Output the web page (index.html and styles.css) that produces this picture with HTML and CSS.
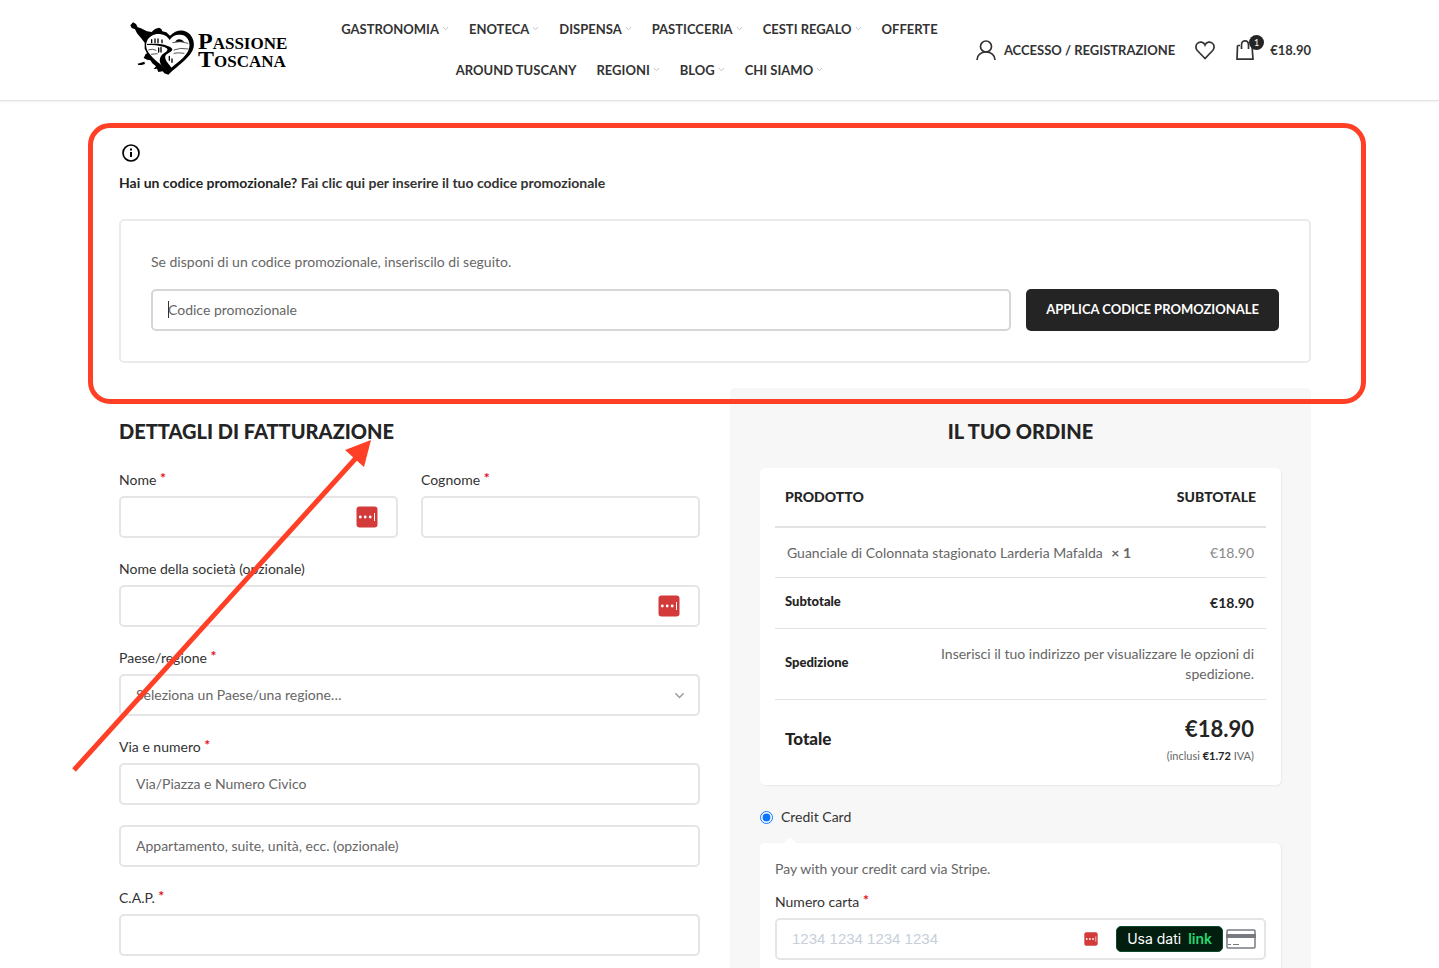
FILE: index.html
```html
<!DOCTYPE html>
<html lang="it">
<head>
<meta charset="utf-8">
<meta name="viewport" content="width=device-width, initial-scale=1">
<title>Pagamento – Passione Toscana</title>
<link rel="stylesheet" href="styles.css">
</head>
<body>
<svg class="defs" aria-hidden="true">
  <symbol id="chev" viewBox="0 0 8 5"><path d="M1 .8 4 4 7 .8" fill="none" stroke="currentColor"/></symbol>
  <symbol id="pass" viewBox="0 0 22 22"><rect x=".5" y=".5" width="21" height="21" rx="3" fill="#d33b3b"/><circle cx="4.300" cy="11" r="1.400" fill="#fff"/><circle cx="9.200" cy="11" r="1.400" fill="#fff"/><circle cx="14.200" cy="11" r="1.400" fill="#fff"/><path d="M18.500 7v8" stroke="#fff"/></symbol>
</svg>
<header class="header">
  <div class="container header-row">
    <a class="logo" href="#">
      <svg class="logo-mark" viewBox="12 3 198 186" aria-hidden="true">
        <path d="M16 22 24 13 33 18 38 28 48 31 58 36 66 40 80 42 86 36 92 32 102 29 109 33 112 40 124 43 135 53C150 38 168 33 184 41 202 50 209 70 206 88 200 116 160 142 130 170L118 166 113 160 100 162 96 152 86 153 93 145 82 136 76 127 66 125 56 120 62 108 66 106 59 92 59 74 48 60 36 46 30 34 20 30Z"/>
        <path d="M134 66C124 47 96 43 80 53 60 65 60 87 70 103 84 124 108 138 128 160 146 140 188 118 193 88 196 70 186 54 172 51 156 48 142 52 134 66Z" fill="#fff"/>
        <path d="M66 78C90 76 112 77 126 83 144 89 148 96 132 104 118 111 118 118 126 132L140 150 128 162 112 146C100 130 102 115 118 105 131 97 130 92 118 87 100 81 84 82 66 81Z"/>
        <path d="M80 65v9M90 63v11M99 63v11M111 66v8M101 90v12M108 88v14M133 115v12M141 123v10" stroke="#000" stroke-width="4" stroke-linecap="round"/>
        <path d="M150 71Q161 57 178 71ZM38 137 48 134 58 131 60 138 50 141 40 141Z"/>
        <path d="M142 74Q164 67 190 76M70 96Q82 91 94 97M146 96Q166 88 190 93M78 109 98 107M146 106Q160 103 178 106" fill="none" stroke="#000" stroke-width="2"/>
      </svg>
      <span class="logo-name">Passione<br>Toscana</span>
    </a>
    <nav class="nav" aria-label="Principale">
      <a href="#">GASTRONOMIA<svg class="caret"><use href="#chev"/></svg></a>
      <a href="#">ENOTECA<svg class="caret"><use href="#chev"/></svg></a>
      <a href="#">DISPENSA<svg class="caret"><use href="#chev"/></svg></a>
      <a href="#">PASTICCERIA<svg class="caret"><use href="#chev"/></svg></a>
      <a href="#">CESTI REGALO<svg class="caret"><use href="#chev"/></svg></a>
      <a href="#">OFFERTE</a>
      <a href="#">AROUND TUSCANY</a>
      <a href="#">REGIONI<svg class="caret"><use href="#chev"/></svg></a>
      <a href="#">BLOG<svg class="caret"><use href="#chev"/></svg></a>
      <a href="#">CHI SIAMO<svg class="caret"><use href="#chev"/></svg></a>
    </nav>
    <div class="tools">
      <a href="#" class="account"><svg class="icon" viewBox="0 0 20 20"><circle cx="10" cy="6.500" r="5.500"/><path d="M1 20C1 15 5 12 10 12s9 3 9 8"/></svg>ACCESSO / REGISTRAZIONE</a>
      <a href="#" aria-label="Preferiti"><svg class="icon" viewBox="0 0 20 20"><path d="M10 18.500 2.300 10.500C.5 8.500.4 5.300 2.300 3.500 4.500 1.300 8.500 1.500 10 5 11.500 1.500 15.500 1.300 17.700 3.500 19.600 5.300 19.500 8.500 17.700 10.500Z"/></svg></a>
      <a href="#" class="cart"><span class="bag"><svg class="icon" viewBox="0 0 20 20"><path d="M2.500 5.500H5M15 5.500H17L18 19.200H2L2.500 5.500M6.500 9V5C6.500-.5 13.500-.5 13.500 5V9"/></svg><span class="badge">1</span></span>€18.90</a>
    </div>
  </div>
</header>
<main class="container main">
  <section class="promo">
    <svg class="info" viewBox="0 0 24 24" aria-hidden="true"><circle cx="12" cy="12" r="8" fill="none" stroke="#000" stroke-width="1.700"/><path d="M11 11h2v5h-2zM11 7.500h2v2h-2z"/></svg>
    <p class="promo-ask">Hai un codice promozionale? <a href="#codice">Fai clic qui per inserire il tuo codice promozionale</a></p>
    <form class="coupon">
      <label for="codice">Se disponi di un codice promozionale, inseriscilo di seguito.</label>
      <div class="coupon-row">
        <div class="field"><input class="input focused" id="codice" type="text" placeholder="Codice promozionale"><span class="cursor"></span></div>
        <button class="apply" type="button">APPLICA CODICE PROMOZIONALE</button>
      </div>
    </form>
  </section>
  <div class="columns">
    <form class="billing">
      <h2>DETTAGLI DI FATTURAZIONE</h2>
      <div class="names">
        <div class="group"><label for="nome">Nome <sup>*</sup></label><div class="field"><input class="input" id="nome" type="text"><svg class="pass"><use href="#pass"/></svg></div></div>
        <div class="group"><label for="cognome">Cognome <sup>*</sup></label><input class="input" id="cognome" type="text"></div>
      </div>
      <div class="group"><label for="societa">Nome della società (opzionale)</label><div class="field"><input class="input" id="societa" type="text"><svg class="pass"><use href="#pass"/></svg></div></div>
      <div class="group"><label for="paese">Paese/regione <sup>*</sup></label><div class="field"><select class="input" id="paese"><option>Seleziona un Paese/una regione…</option></select><svg class="select-caret"><use href="#chev"/></svg></div></div>
      <div class="group"><label for="via">Via e numero <sup>*</sup></label><input class="input" id="via" type="text" placeholder="Via/Piazza e Numero Civico"></div>
      <input class="input" type="text" aria-label="Appartamento" placeholder="Appartamento, suite, unità, ecc. (opzionale)">
      <div class="group"><label for="cap">C.A.P. <sup>*</sup></label><input class="input" id="cap" type="text"></div>
      <svg class="arrow" viewBox="0 0 300 332" aria-hidden="true"><path d="M2 330 284 18" stroke="#ff4026" stroke-width="5"/><path d="M299 0 273 10 292 27Z" fill="#ff4026"/></svg>
    </form>
    <section class="order">
      <h2>IL TUO ORDINE</h2>
      <div class="summary">
        <table>
          <colgroup><col class="col-name"><col><col class="col-price"></colgroup>
          <thead><tr><th scope="col" colspan="2">PRODOTTO</th><th scope="col">SUBTOTALE</th></tr></thead>
          <tbody>
            <tr class="item"><td colspan="2">Guanciale di Colonnata stagionato Larderia Mafalda <b>× 1</b></td><td>€18.90</td></tr>
            <tr><th scope="row">Subtotale</th><td class="strong" colspan="2">€18.90</td></tr>
            <tr><th scope="row">Spedizione</th><td colspan="2">Inserisci il tuo indirizzo per visualizzare le opzioni di spedizione.</td></tr>
            <tr class="total"><th scope="row">Totale</th><td colspan="2"><strong>€18.90</strong><small>(inclusi <b>€1.72</b> IVA)</small></td></tr>
          </tbody>
        </table>
      </div>
      <label class="method"><input type="radio" name="metodo" checked>Credit Card</label>
      <div class="payment">
        <p>Pay with your credit card via Stripe.</p>
        <label for="carta">Numero carta <sup>*</sup></label>
        <div class="field">
          <input class="input card-input" id="carta" type="text" placeholder="1234 1234 1234 1234">
          <div class="card-extras">
            <svg class="pass-small"><use href="#pass"/></svg>
            <button class="link" type="button">Usa dati <b>link</b></button>
            <svg class="card" viewBox="0 0 30 20" aria-hidden="true"><rect x="1" y="1" width="28" height="18" rx="1" fill="#fff" stroke="#777b80" stroke-width="1.500"/><path d="M0 5h30v4H0z" fill="#777b80"/><path d="M2 15.500h3M7 15.500h6" stroke="#777b80" stroke-width="1.200"/></svg>
          </div>
        </div>
      </div>
    </section>
  </div>
</main>
</body>
</html>
```
FILE: styles.css
```css
* { box-sizing: border-box; }
body { margin: 0; background: #fff; color: #666; font: 14px/20px Lato, sans-serif; }
a { color: inherit; text-decoration: none; }
p, h2 { margin: 0; }
.defs { display: none; }
.header, .main { padding-right: 9px; }
.container { max-width: 1192px; margin: 0 auto; }
.header { border-bottom: 1px solid #e3e3e3; box-shadow: 0 1px 2px rgba(0, 0, 0, .06); }
.header-row { display: flex; align-items: center; min-height: 100px; color: #333; font-size: 13px; font-weight: 700; }
.logo { display: flex; flex: 0 0 184px; align-items: center; gap: 3px; padding-left: 10px; color: #000; }
.logo-mark { flex: none; width: 66px; height: 62px; }
.logo-name { padding-bottom: 1px; font: bold 24px/18px "Liberation Serif", serif; font-variant: small-caps; }
.nav { display: flex; flex: 1; flex-wrap: wrap; justify-content: center; column-gap: 20px; padding: 0 10px 2px; }
.nav a { display: flex; align-items: center; gap: 3px; height: 41px; white-space: nowrap; }
.caret { width: 7px; height: 5px; color: #bbb; }
.tools { display: flex; align-items: center; gap: 20px; white-space: nowrap; }
.tools a { display: flex; align-items: center; gap: 8px; }
.icon { display: block; width: 20px; height: 20px; fill: none; stroke: #333; stroke-width: 1.7; }
.bag { position: relative; margin-right: 7px; }
.badge { position: absolute; top: -5px; right: -9px; width: 15px; height: 15px; border-radius: 50%; background: #242424; color: #fff; font-size: 9px; font-weight: 400; line-height: 15px; text-align: center; }

.main { display: flex; flex-direction: column; min-height: calc(100vh - 101px); max-width: 1201px; padding-top: 40px; }
.promo { position: relative; }
.promo::after { content: ""; position: absolute; inset: -18px -55px -41px -31px; border: 5px solid #ff4026; border-radius: 22px; pointer-events: none; z-index: 2; }
.info { display: block; width: 24px; height: 24px; }
.promo-ask { margin: 8px 0 26px; color: #242424; font-weight: 700; }
.promo-ask a { color: #333; }
.coupon { padding: 31px 30px 30px; border: 2px solid #ebebeb; border-radius: 5px; }
.coupon label { display: block; margin-bottom: 17px; }
.coupon-row { display: flex; gap: 15px; }
.coupon-row .field { flex: 1; }
.field { position: relative; }
.input { display: block; width: 100%; height: 42px; padding: 0 15px 2px; border: 2px solid #e5e5e5; border-radius: 5px; background: #fff; color: #666; font: inherit; appearance: none; }
.input::placeholder { color: #666; opacity: 1; }
select.input { padding-bottom: 0; }
.focused { border-color: #d6d6d6; }
.cursor { position: absolute; top: 12px; left: 17px; width: 1px; height: 17px; background: #333; }
.apply { height: 42px; padding: 0 20px 2px; border: 0; border-radius: 5px; background: #242424; color: #fff; font: 700 13px/20px Lato, sans-serif; }

.columns { display: grid; flex: 1; grid-template-columns: minmax(0, 1fr) minmax(0, 1fr); gap: 30px; margin-top: 25px; }
h2 { color: #242424; font-size: 20px; font-weight: 900; line-height: 26px; }
.billing { position: relative; display: flex; flex-direction: column; gap: 20px; padding-top: 30px; }
.billing h2 { margin-bottom: 5px; }
.names { display: grid; grid-template-columns: 1fr 1fr; gap: 23px; }
.group label { display: block; margin-bottom: 5px; color: #333; line-height: 22px; }
sup { color: #e01020; font-size: 14px; font-weight: 700; line-height: 0; vertical-align: 2px; }
.pass { position: absolute; top: 10px; right: 20px; width: 22px; height: 22px; }
.select-caret { position: absolute; top: 18px; right: 15px; width: 11px; height: 7px; color: #999; }
.arrow { position: absolute; top: 52px; left: -47px; width: 300px; height: 332px; z-index: 2; pointer-events: none; }

.order { display: flex; flex-direction: column; padding: 30px 30px 0; border-radius: 5px 5px 0 0; background: #f7f7f7; }
.order h2 { margin-bottom: 24px; text-align: center; }
.summary { padding: 0 15px; border-radius: 5px; background: #fff; box-shadow: 1px 1px 2px rgba(0, 0, 0, .06); }
table { width: 100%; border-collapse: collapse; table-layout: fixed; }
.col-name { width: 28%; }
.col-price { width: 22%; }
th, td { padding: 15px 12px 15px 10px; border-bottom: 1px solid #e2e2e2; text-align: right; }
th:first-child, td:first-child { text-align: left; }
th { color: #242424; font-size: 13px; font-weight: 900; }
tbody th { padding-bottom: 17px; padding-top: 13px; }
thead th { padding: 19px 10px; border-bottom-width: 2px; font-size: 14px; }
.item td { padding-bottom: 14px; }
.item td:first-child { padding-left: 12px; white-space: nowrap; }
.item td:last-child { color: #888; }
.item b { margin-left: 5px; }
td.strong { color: #242424; font-weight: 700; }
.total th { font-size: 17px; }
.total th, .total td { border-bottom: 0; padding-bottom: 20px; }
.total td { padding-top: 14px; }
.total strong { display: block; margin-bottom: 3px; color: #242424; font-size: 22px; line-height: 30px; }
.total small { display: block; font-size: 11px; line-height: 18px; }
.total b { color: #242424; }
.method { display: flex; align-items: center; gap: 8px; margin: 22px 0 16px; color: #333; }
.method input { width: 13px; height: 13px; margin: 0; accent-color: #0a75ff; }
.payment { position: relative; flex: 1; padding: 16px 15px 8px; border-radius: 5px 5px 0 0; background: #fff; box-shadow: 1px 0 2px rgba(0, 0, 0, .06); }
.payment::before { content: ""; position: absolute; top: -6px; left: 24px; border: 6px solid transparent; border-top: 0; border-bottom-color: #fff; }
.payment p { margin-bottom: 12px; }
.payment label { display: block; margin-bottom: 5px; color: #333; line-height: 22px; }
.card-input { font: 15px/20px "Liberation Sans", sans-serif; }
.card-input::placeholder { color: #c6cfda; }
.card-extras { position: absolute; top: 8px; right: 10px; display: flex; align-items: center; }
.pass-small { width: 14px; height: 14px; margin-right: 18px; }
.link { height: 26px; margin-right: 3px; padding: 0 10px; border: 1px solid #0c4a2a; border-radius: 5px; background: #011e0f; color: #fff; font: 14px/24px Inter, sans-serif; }
.link b { margin-left: 3px; color: #2bd56f; font-weight: 600; }
.card { width: 30px; height: 20px; }
```
